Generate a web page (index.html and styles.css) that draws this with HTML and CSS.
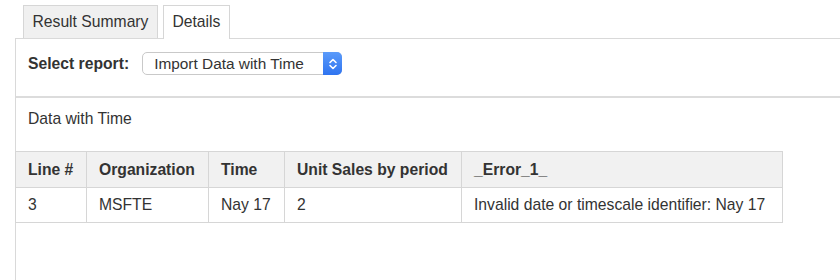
FILE: index.html
```html
<!DOCTYPE html>
<html lang="en">
<head>
  <meta charset="UTF-8">
  <title>Report Details</title>
  <link rel="stylesheet" href="styles.css">
</head>
<body>
<div class="tabs">
  <div class="tab">Result Summary</div>
  <div class="tab active">Details</div>
</div>
<div class="panel">
  <div class="toolbar">
    <label class="toolbar-label">Select report:</label>
    <div class="select-box">
      <span class="select-text">Import Data with Time</span>
      <span class="stepper">
        <svg width="10" height="14" viewBox="0 0 10 14">
          <path d="M2 5.5 L5 2.5 L8 5.5 M2 8.5 L5 11.5 L8 8.5" fill="none" stroke="#fff" stroke-width="1.6" stroke-linecap="round" stroke-linejoin="round"/>
        </svg>
      </span>
    </div>
  </div>
  <div class="report">
    <div class="report-title">Data with Time</div>
    <table class="data-table">
      <colgroup>
        <col class="c-line">
        <col class="c-org">
        <col class="c-time">
        <col class="c-sales">
        <col class="c-error">
      </colgroup>
      <thead>
        <tr>
          <th>Line #</th>
          <th>Organization</th>
          <th>Time</th>
          <th>Unit Sales by period</th>
          <th>_Error_1_</th>
        </tr>
      </thead>
      <tbody>
        <tr>
          <td>3</td>
          <td>MSFTE</td>
          <td>Nay 17</td>
          <td>2</td>
          <td>Invalid date or timescale identifier: Nay 17</td>
        </tr>
      </tbody>
    </table>
  </div>
</div>
</body>
</html>
```

FILE: styles.css
```css
* { margin: 0; padding: 0; box-sizing: border-box; }
body { font-family: "Liberation Sans", Arial, sans-serif; font-size: 15.7px; color: #333; background: #fff; overflow: hidden; }

.tabs { display: flex; padding: 5px 0 0 23px; gap: 5px; height: 39px; }
.tab { height: 33px; padding: 0 8.5px; line-height: 32px; border: 1px solid #d6d6d6; border-bottom: none; background: #f0f0f0; color: #333; }
.tab.active { background: #fff; height: 34px; position: relative; z-index: 1; }

.panel { margin-top: -1px; margin-left: 15px; border-top: 1px solid #d9d9d9; border-left: 1px solid #d9d9d9; min-height: 242px; }

.toolbar { display: flex; align-items: center; gap: 13px; padding: 13px 0 21px 12px; border-bottom: 2px solid #dcdcdc; }
.toolbar-label { font-weight: bold; }
.select-box { display: flex; align-items: center; width: 200px; height: 23px; border: 1px solid #c9c9c9; border-radius: 5px; background: #fff; font-size: 15.4px; }
.select-text { flex: 1; padding-left: 11px; line-height: 21px; }
.stepper { display: flex; align-items: center; justify-content: center; width: 19px; height: 23px; margin: -1px -1px -1px 0; border-radius: 0 5px 5px 0; background: linear-gradient(#5b9bfa, #2f74f0); }

.report { padding-top: 12px; }
.report-title { padding-left: 12px; line-height: 18px; margin-bottom: 23px; }

.data-table { border-collapse: collapse; table-layout: fixed; width: 767px; margin-left: -1px; }
.c-line { width: 71px; }
.c-org { width: 122px; }
.c-time { width: 76px; }
.c-sales { width: 177px; }
.c-error { width: 321px; }
.data-table th, .data-table td { border: 1px solid #d6d6d6; padding: 0 12px; text-align: left; white-space: nowrap; }
.data-table th { height: 36px; background: #f1f1f1; font-weight: bold; }
.data-table td { height: 35px; }
```
